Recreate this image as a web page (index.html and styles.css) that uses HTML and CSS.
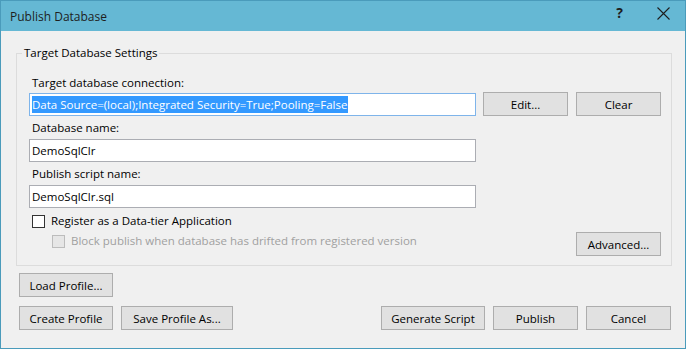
FILE: index.html
```html
<!DOCTYPE html>
<html>
<head>
<title>Publish Database</title>
<link rel="stylesheet" href="styles.css">
</head>
<body>
<div class="window">
	<div class="title_bar">
		<span class="title_text">Publish Database</span>
		<span class="help_btn">?</span>
		<svg class="close_btn" width="13" height="13" viewBox="0 0 13 13">
			<path d="M0.5 0.5 L12.5 12.5 M12.5 0.5 L0.5 12.5" stroke="#1e1e1e" stroke-width="1.1" fill="none"/>
		</svg>
	</div>
	<div class="client_area">
		<fieldset class="group">
			<legend>Target Database Settings</legend>
			<div class="field_label">Target database connection:</div>
			<div class="conn_row">
				<div class="edit_box conn_box"><span class="selected">Data Source=(local);Integrated Security=True;Pooling=False</span></div>
				<button class="btn conn_btn">Edit...</button>
				<button class="btn conn_btn">Clear</button>
			</div>
			<div class="field_label">Database name:</div>
			<div class="edit_box">DemoSqlClr</div>
			<div class="field_label">Publish script name:</div>
			<div class="edit_box">DemoSqlClr.sql</div>
			<div class="check_row">
				<span class="check_box"></span>
				<span>Register as a Data-tier Application</span>
			</div>
			<div class="advanced_row">
				<div class="check_row disabled">
					<span class="check_box"></span>
					<span>Block publish when database has drifted from registered version</span>
				</div>
				<button class="btn advanced_btn">Advanced...</button>
			</div>
		</fieldset>
		<div class="load_row">
			<button class="btn profile_btn">Load Profile...</button>
		</div>
		<div class="bottom_row">
			<div class="btn_group">
				<button class="btn profile_btn">Create Profile</button>
				<button class="btn save_btn">Save Profile As...</button>
			</div>
			<div class="btn_group">
				<button class="btn generate_btn">Generate Script</button>
				<button class="btn action_btn">Publish</button>
				<button class="btn action_btn">Cancel</button>
			</div>
		</div>
	</div>
</div>
</body>
</html>
```

FILE: styles.css
```css
body
{
	margin : 0;
	font-family : "Open Sans", "Noto Sans", sans-serif;
	font-size : 11.5px;
	color : #000000;
	background-color : #ffffff;
}
.window
{
	width : 684px;
	height : 347px;
	border : 1px solid #4a9bbb;
	background-color : #f0f0f0;
	display : flex;
	flex-direction : column;
}
.title_bar
{
	height : 30px;
	background-color : #65b8d4;
	display : flex;
	align-items : center;
	padding-left : 9px;
	color : #1e1e1e;
	font-size : 12px;
}
.title_text
{
	flex : 1;
}
.help_btn
{
	font-weight : bold;
	font-size : 14px;
	margin-right : 34px;
	margin-top : -8px;
}
.close_btn
{
	margin-right : 15px;
	margin-top : -6px;
}
.client_area
{
	padding : 14px 13px 0 15px;
	display : flex;
	flex-direction : column;
}
.group
{
	margin : 0;
	border : 1px solid #dcdcdc;
	padding : 14px 10px 9px 12px;
	display : flex;
	flex-direction : column;
}
.group legend
{
	padding : 0 2px;
	margin-left : -7px;
	line-height : 16px;
}
.field_label
{
	line-height : 16px;
	padding-left : 3px;
}
.edit_box
{
	width : 443px;
	height : 21px;
	border : 1px solid #abadb3;
	background-color : #ffffff;
	line-height : 21px;
	padding-left : 2px;
	box-sizing : content-box;
	margin : 3px 0 4px 0;
}
.conn_row
{
	display : flex;
	gap : 7px;
	align-items : flex-start;
	margin-top : 1px;
}
.conn_box
{
	margin : 1px 0 0 0;
	border-color : #7eb4ea;
	display : flex;
	align-items : center;
}
.selected
{
	background-color : #3399ff;
	color : #ffffff;
	line-height : 17px;
	padding-right : 1px;
}
.conn_row .conn_btn + .conn_btn
{
	margin-left : 1px;
}
.conn_row + .field_label
{
	margin-top : 4px;
}
.btn
{
	height : 24px;
	border : 1px solid #adadad;
	background-color : #e1e1e1;
	font-family : inherit;
	font-size : 11.5px;
	color : #000000;
	padding : 0;
}
.conn_btn, .advanced_btn, .action_btn
{
	width : 85px;
}
.check_row
{
	display : flex;
	align-items : center;
	gap : 6px;
	line-height : 16px;
	padding-left : 3px;
	margin-top : 1px;
}
.check_box
{
	width : 11px;
	height : 11px;
	border : 1px solid #333333;
	background-color : #ffffff;
}
.disabled
{
	color : #a0a0a0;
	padding-left : 23px;
	margin-top : 1px;
}
.disabled .check_box
{
	border-color : #bcbcbc;
	background-color : #e6e6e6;
}
.advanced_row
{
	display : flex;
	justify-content : space-between;
	align-items : flex-start;
	margin-top : 3px;
}
.load_row
{
	margin-top : 7px;
	padding-left : 3px;
}
.profile_btn
{
	width : 94px;
}
.save_btn
{
	width : 112px;
}
.generate_btn
{
	width : 104px;
}
.bottom_row
{
	display : flex;
	justify-content : space-between;
	margin-top : 9px;
	padding-left : 3px;
	padding-right : 1px;
}
.btn_group
{
	display : flex;
	gap : 8px;
}
```
